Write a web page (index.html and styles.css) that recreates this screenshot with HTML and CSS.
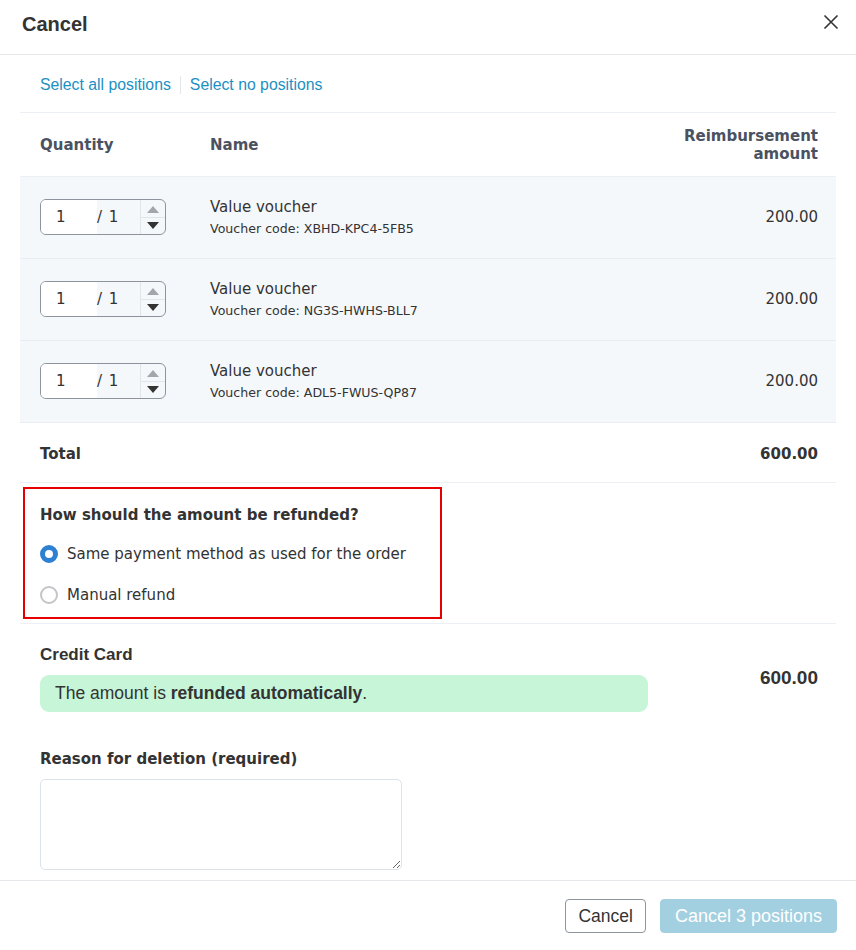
FILE: index.html
```html
<!DOCTYPE html>
<html lang="en">
<head>
  <meta charset="UTF-8">
  <meta name="viewport" content="width=device-width, initial-scale=1.0">
  <title>Cancel positions</title>
  <link rel="stylesheet" href="styles.css">
</head>
<body>

  <div class="modal">
    <div class="modal-header">
      <h1>Cancel</h1>
      <button type="button" class="close" aria-label="Close">
        <svg width="16" height="16" viewBox="0 0 16 16"><path d="M1.5 1.5 L14.5 14.5 M14.5 1.5 L1.5 14.5" stroke="#333" stroke-width="1.6" fill="none"/></svg>
      </button>
    </div>

    <div class="modal-body">
      <div class="select-links">
        <a href="#">Select all positions</a>
        <span class="sep"></span>
        <a href="#">Select no positions</a>
      </div>

      <table class="positions">
        <thead>
          <tr>
            <th class="col-qty">Quantity</th>
            <th>Name</th>
            <th class="num">Reimbursement<br>amount</th>
          </tr>
        </thead>
        <tbody>
          <tr class="item">
            <td>
              <div class="qty">
                <span class="qty-input">1</span>
                <span class="qty-max">/ 1</span>
                <span class="spin"><span class="up"></span><span class="down"></span></span>
              </div>
            </td>
            <td>
              <div class="item-name">Value voucher</div>
              <div class="item-code">Voucher code: XBHD-KPC4-5FB5</div>
            </td>
            <td class="num">200.00</td>
          </tr>
          <tr class="item">
            <td>
              <div class="qty">
                <span class="qty-input">1</span>
                <span class="qty-max">/ 1</span>
                <span class="spin"><span class="up"></span><span class="down"></span></span>
              </div>
            </td>
            <td>
              <div class="item-name">Value voucher</div>
              <div class="item-code">Voucher code: NG3S-HWHS-BLL7</div>
            </td>
            <td class="num">200.00</td>
          </tr>
          <tr class="item">
            <td>
              <div class="qty">
                <span class="qty-input">1</span>
                <span class="qty-max">/ 1</span>
                <span class="spin"><span class="up"></span><span class="down"></span></span>
              </div>
            </td>
            <td>
              <div class="item-name">Value voucher</div>
              <div class="item-code">Voucher code: ADL5-FWUS-QP87</div>
            </td>
            <td class="num">200.00</td>
          </tr>
          <tr class="total">
            <td colspan="2">Total</td>
            <td class="num">600.00</td>
          </tr>
        </tbody>
      </table>

      <div class="refund">
        <div class="refund-box">
          <h3>How should the amount be refunded?</h3>
          <label class="radio"><span class="dot checked"></span>Same payment method as used for the order</label>
          <label class="radio"><span class="dot"></span>Manual refund</label>
        </div>
      </div>

      <div class="payment">
        <div class="payment-info">
          <div class="payment-name">Credit Card</div>
          <div class="alert">The amount is <b>refunded automatically</b>.</div>
        </div>
        <div class="payment-amount">600.00</div>
      </div>

      <div class="reason">
        <label for="reason">Reason for deletion (required)</label>
        <textarea id="reason"></textarea>
      </div>
    </div>

    <div class="modal-footer">
      <button type="button" class="btn">Cancel</button>
      <button type="button" class="btn btn-primary">Cancel 3 positions</button>
    </div>
  </div>

</body>
</html>
```

FILE: styles.css
```css
body {
  margin: 0;
  background: #fff;
  color: #333;
  font-family: 'DejaVu Sans', Verdana, sans-serif;
}

.modal {
  width: 856px;
  height: 950px;
  display: flex;
  flex-direction: column;
  overflow: hidden;
}

.modal-header {
  flex-shrink: 0;
  height: 54px;
  border-bottom: 1px solid #e6e8eb;
  display: flex;
  justify-content: space-between;
  align-items: flex-start;
  padding: 0 17px 0 22px;
}

.modal-header h1 {
  margin: 12px 0 0;
  font-family: 'Liberation Sans', Arial, sans-serif;
  font-size: 20px;
  line-height: 24px;
  font-weight: bold;
  color: #333;
}

.close {
  margin-top: 14px;
  padding: 0;
  border: none;
  background: none;
  cursor: pointer;
}

.modal-body {
  flex: 1;
  min-height: 0;
  overflow: hidden;
  padding: 0 20px;
}

.select-links {
  display: flex;
  align-items: center;
  padding: 20px 0 17px 20px;
  border-bottom: 1px solid #eceff3;
  line-height: 20px;
  font-family: 'Liberation Sans', Arial, sans-serif;
  font-size: 15.8px;
}

.select-links a {
  color: #1d8fc2;
  text-decoration: none;
}

.sep {
  width: 1px;
  height: 18px;
  background: #e3e6ea;
  margin: 0 9px 0 9px;
}

.positions {
  width: 100%;
  border-collapse: collapse;
  font-size: 15px;
}

.positions th {
  text-align: left;
  padding: 14px 18px 13px 20px;
  line-height: 18px;
  color: #4a5262;
  font-weight: bold;
  border-bottom: 1px solid #eceff3;
}

.positions th.col-qty {
  width: 132px;
}

.positions .num {
  text-align: right;
}

.item td {
  background: #f5f8fb;
  padding: 20px 18px 21px 20px;
  border-bottom: 1px solid #e9edf2;
  vertical-align: middle;
}

.item-name {
  line-height: 20px;
}

.item-code {
  font-size: 12.6px;
  line-height: 16px;
  margin-top: 4px;
}

.qty {
  display: flex;
  width: 124px;
  height: 34px;
  border: 1px solid #8e949c;
  border-radius: 6px;
  overflow: hidden;
  line-height: 34px;
}

.qty-input {
  width: 41px;
  padding-left: 15px;
  background: #fff;
}

.qty-max {
  flex: 1;
  word-spacing: 2px;
}

.spin {
  width: 24px;
  border-left: 1px solid #e1e4e8;
  display: flex;
  flex-direction: column;
}

.spin span {
  flex: 1;
  display: flex;
  align-items: center;
  justify-content: center;
}

.spin .up {
  border-bottom: 1px solid #e1e4e8;
}

.spin .up::after {
  content: '';
  border-left: 6px solid transparent;
  border-right: 6px solid transparent;
  border-bottom: 7px solid #a3a6aa;
  margin-top: 2px;
}

.spin .down::after {
  content: '';
  border-left: 6px solid transparent;
  border-right: 6px solid transparent;
  border-top: 7px solid #333;
  margin-bottom: 1px;
}

.total td {
  padding: 21px 18px 18px 20px;
  line-height: 20px;
  font-weight: bold;
  border-bottom: 1px solid #eceff3;
}

.refund {
  padding: 4px 0 4px 3px;
  border-bottom: 1px solid #eceff3;
}

.refund-box {
  width: 419px;
  box-sizing: border-box;
  border: 2px solid #e60000;
  padding: 16px 15px 12px;
}

.refund-box h3 {
  margin: 0;
  font-size: 15px;
  line-height: 20px;
}

.radio {
  display: flex;
  align-items: center;
  margin-top: 19px;
  line-height: 20px;
  font-size: 15px;
}

.radio + .radio {
  margin-top: 21px;
}

.dot {
  width: 14px;
  height: 14px;
  border: 2px solid #c3c5c8;
  border-radius: 50%;
  margin-right: 9px;
  background: #fff;
}

.dot.checked {
  width: 8px;
  height: 8px;
  border: 5px solid #2e80d2;
}

.payment {
  display: flex;
  align-items: center;
  justify-content: space-between;
  padding: 20px 18px 0 20px;
}

.payment-info {
  width: 608px;
}

.payment-name {
  font-family: 'Liberation Sans', Arial, sans-serif;
  font-size: 17px;
  font-weight: bold;
  line-height: 22px;
}

.alert {
  margin-top: 9px;
  padding: 8px 15px;
  line-height: 21px;
  background: #c6f5d7;
  border-radius: 9px;
  font-family: 'Liberation Sans', Arial, sans-serif;
  font-size: 17.5px;
}

.payment-amount {
  font-family: 'Liberation Sans', Arial, sans-serif;
  font-size: 19px;
  font-weight: bold;
}

.reason {
  padding: 37px 0 0 20px;
}

.reason label {
  display: block;
  font-size: 15px;
  font-weight: bold;
  line-height: 20px;
}

.reason textarea {
  display: block;
  margin-top: 10px;
  width: 362px;
  height: 91px;
  box-sizing: border-box;
  border: 1px solid #dde3ea;
  border-radius: 5px;
}

.modal-footer {
  flex-shrink: 0;
  border-top: 1px solid #e6e8eb;
  display: flex;
  justify-content: flex-end;
  gap: 14px;
  padding: 18px 19px 17px 0;
}

.btn {
  height: 34px;
  padding: 0 12px;
  border: 1px solid #8e949c;
  border-radius: 4px;
  background: #fff;
  color: #333;
  font-family: 'Liberation Sans', Arial, sans-serif;
  font-size: 17.5px;
  cursor: pointer;
}

.btn-primary {
  padding: 0 14px;
  border-color: #a3d0e1;
  background: #a3d0e1;
  color: #fff;
  font-size: 18px;
}
```
